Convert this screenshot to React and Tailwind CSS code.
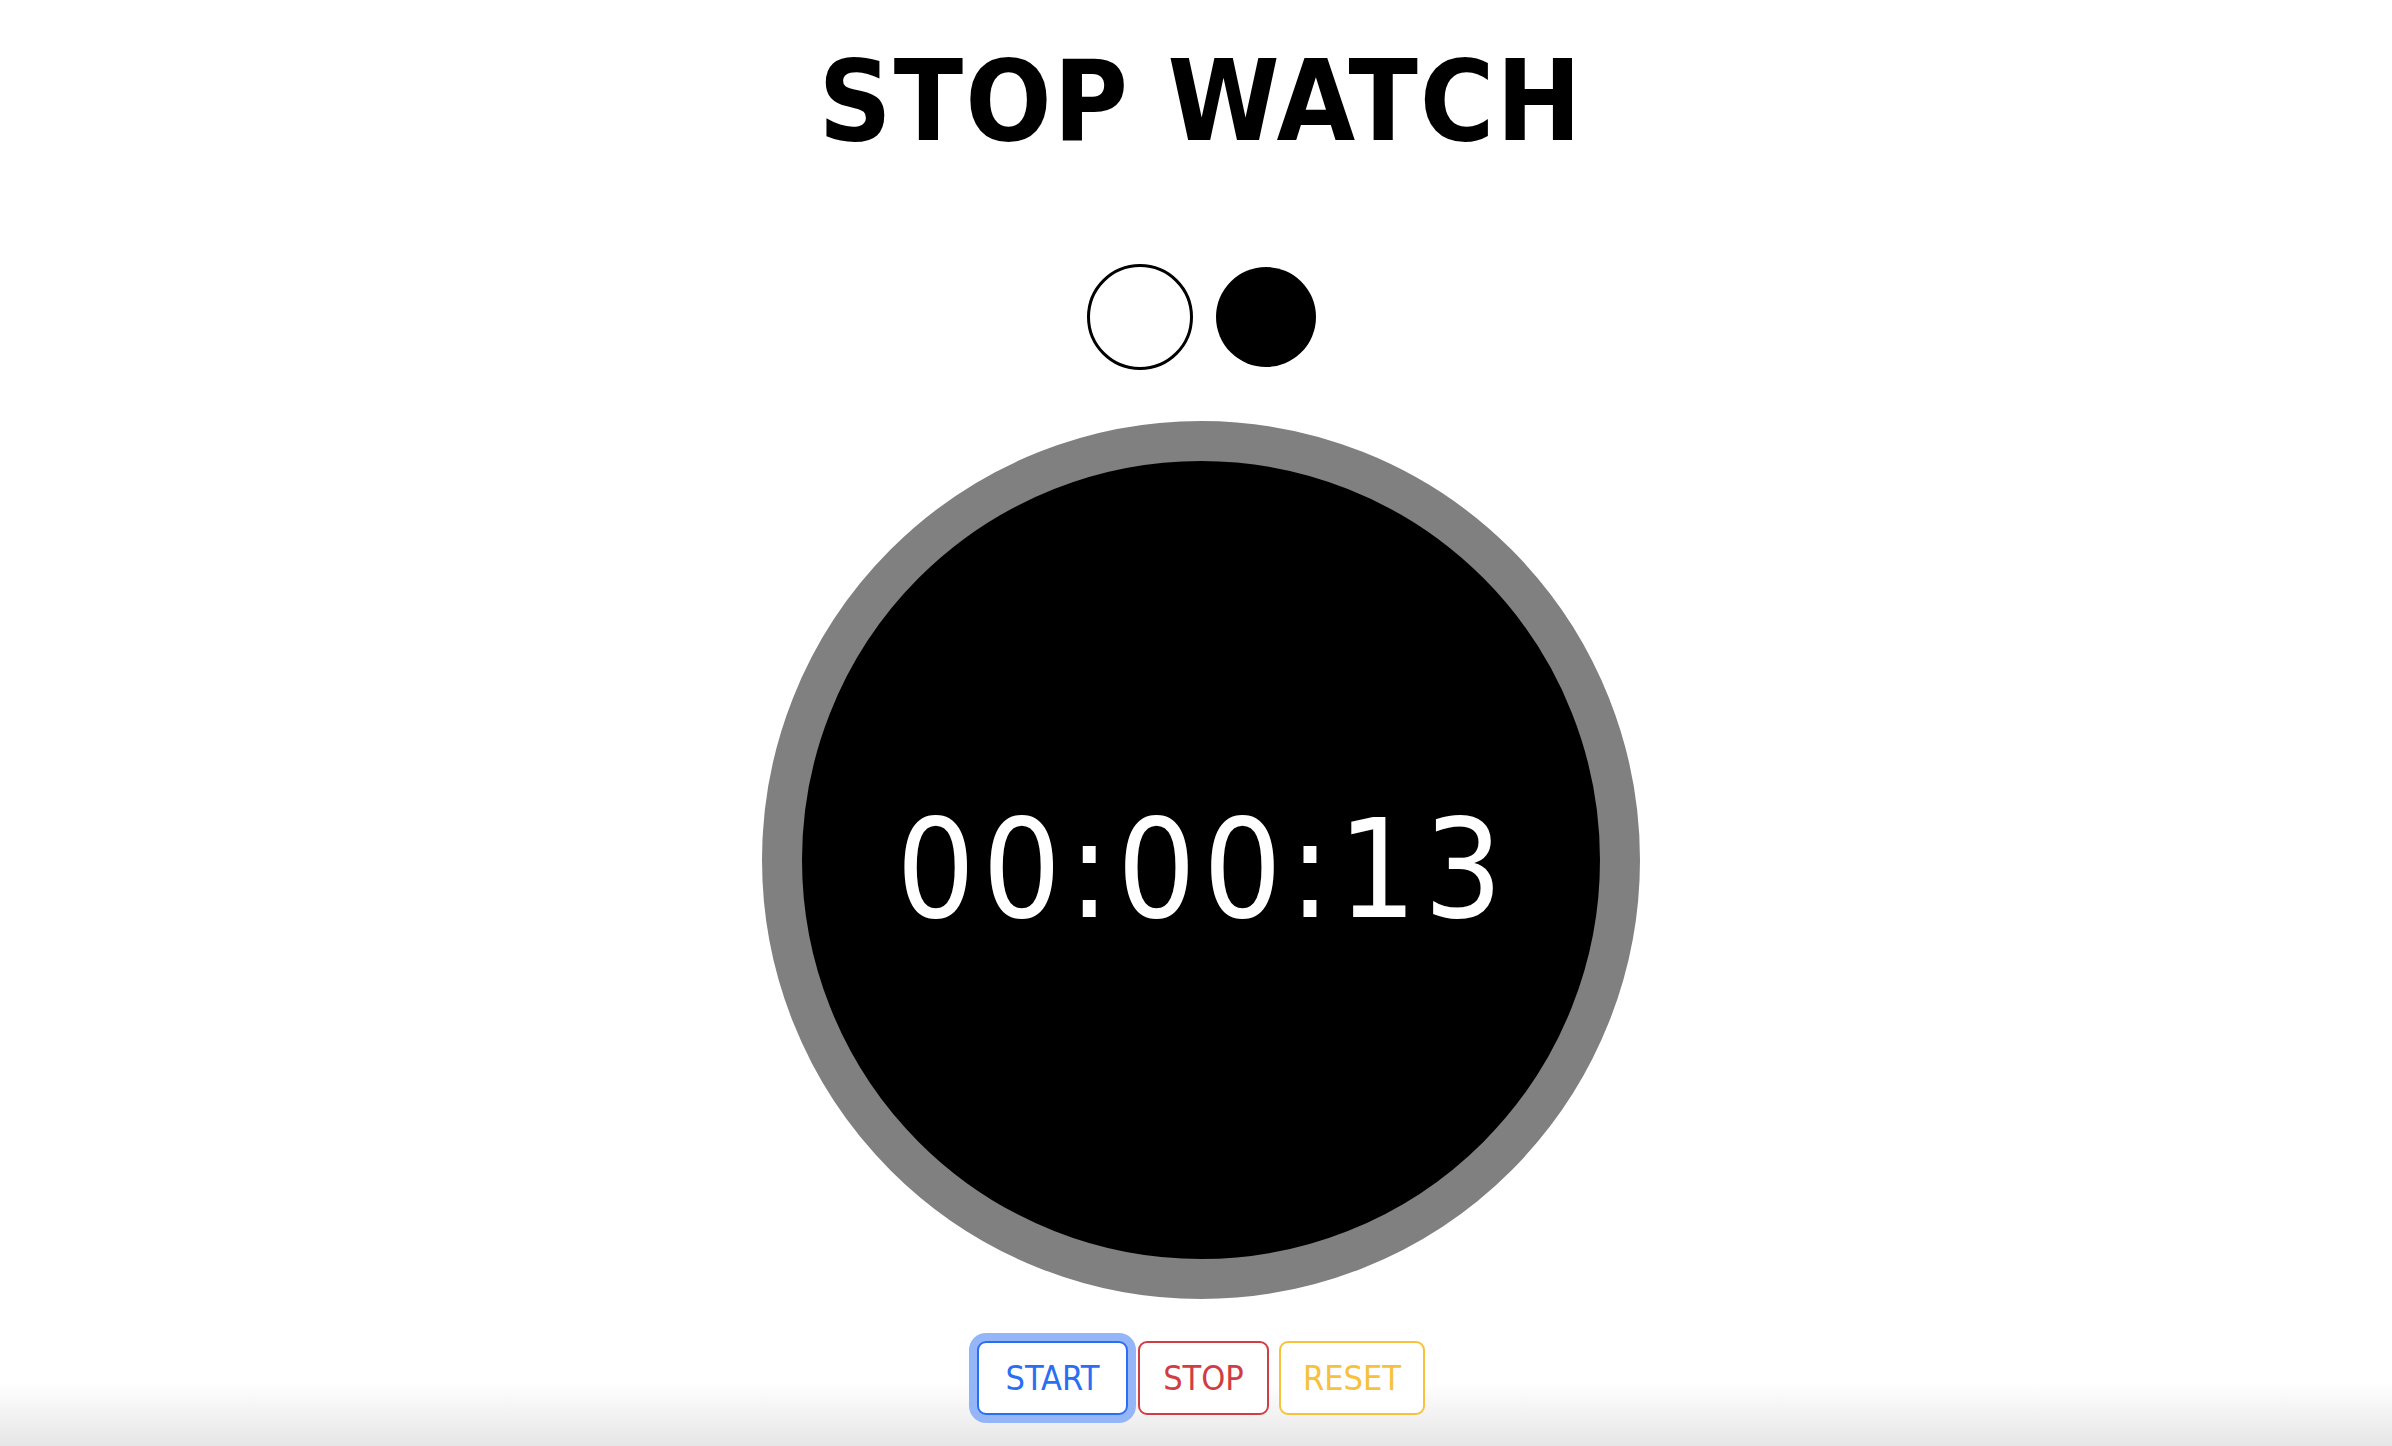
import React, { useState } from 'react';

function App() {
  const [time] = useState('00:00:13');

  return (
    <div
      className="h-screen overflow-hidden bg-[linear-gradient(to_bottom,#ffffff_calc(100%-64px),#e6e6e6)] flex flex-col items-center pl-[10px]"
      style={{ fontFamily: '"DejaVu Sans Condensed", "DejaVu Sans", sans-serif' }}
    >
      {/* Title */}
      <h1 className="mt-[45px] h-[112px] text-[113px] leading-none font-bold tracking-[2px] text-black">
        STOP WATCH
      </h1>

      {/* Theme toggles */}
      <div className="mt-[107px] flex items-center gap-[23px]">
        <button className="w-[106px] h-[106px] rounded-full border-[3px] border-black bg-white"></button>
        <button className="w-[100px] h-[100px] rounded-full bg-black"></button>
      </div>

      {/* Clock face */}
      <div className="mt-[51px] w-[878px] h-[878px] rounded-full border-[40px] border-[#808080] bg-black flex items-center justify-center">
        <span className="pt-[19px] pl-[4px] text-[138px] leading-none tracking-[7px] text-white">{time}</span>
      </div>

      {/* Controls */}
      <div className="mt-[42px] flex items-center gap-[10px]">
        <button className="w-[151px] h-[74px] rounded-[9px] border-2 border-[#2a6ff2] text-[#2a6ff2] text-[34px] bg-white shadow-[0_0_0_8px_#94b6f9]">
          START
        </button>
        <button className="w-[131px] h-[74px] rounded-[9px] border-2 border-[#d13d45] text-[#d13d45] text-[34px] bg-white">
          STOP
        </button>
        <button className="w-[146px] h-[74px] rounded-[9px] border-2 border-[#f7c13c] text-[#f7c13c] text-[34px] bg-white">
          RESET
        </button>
      </div>
    </div>
  );
}

export default App;
